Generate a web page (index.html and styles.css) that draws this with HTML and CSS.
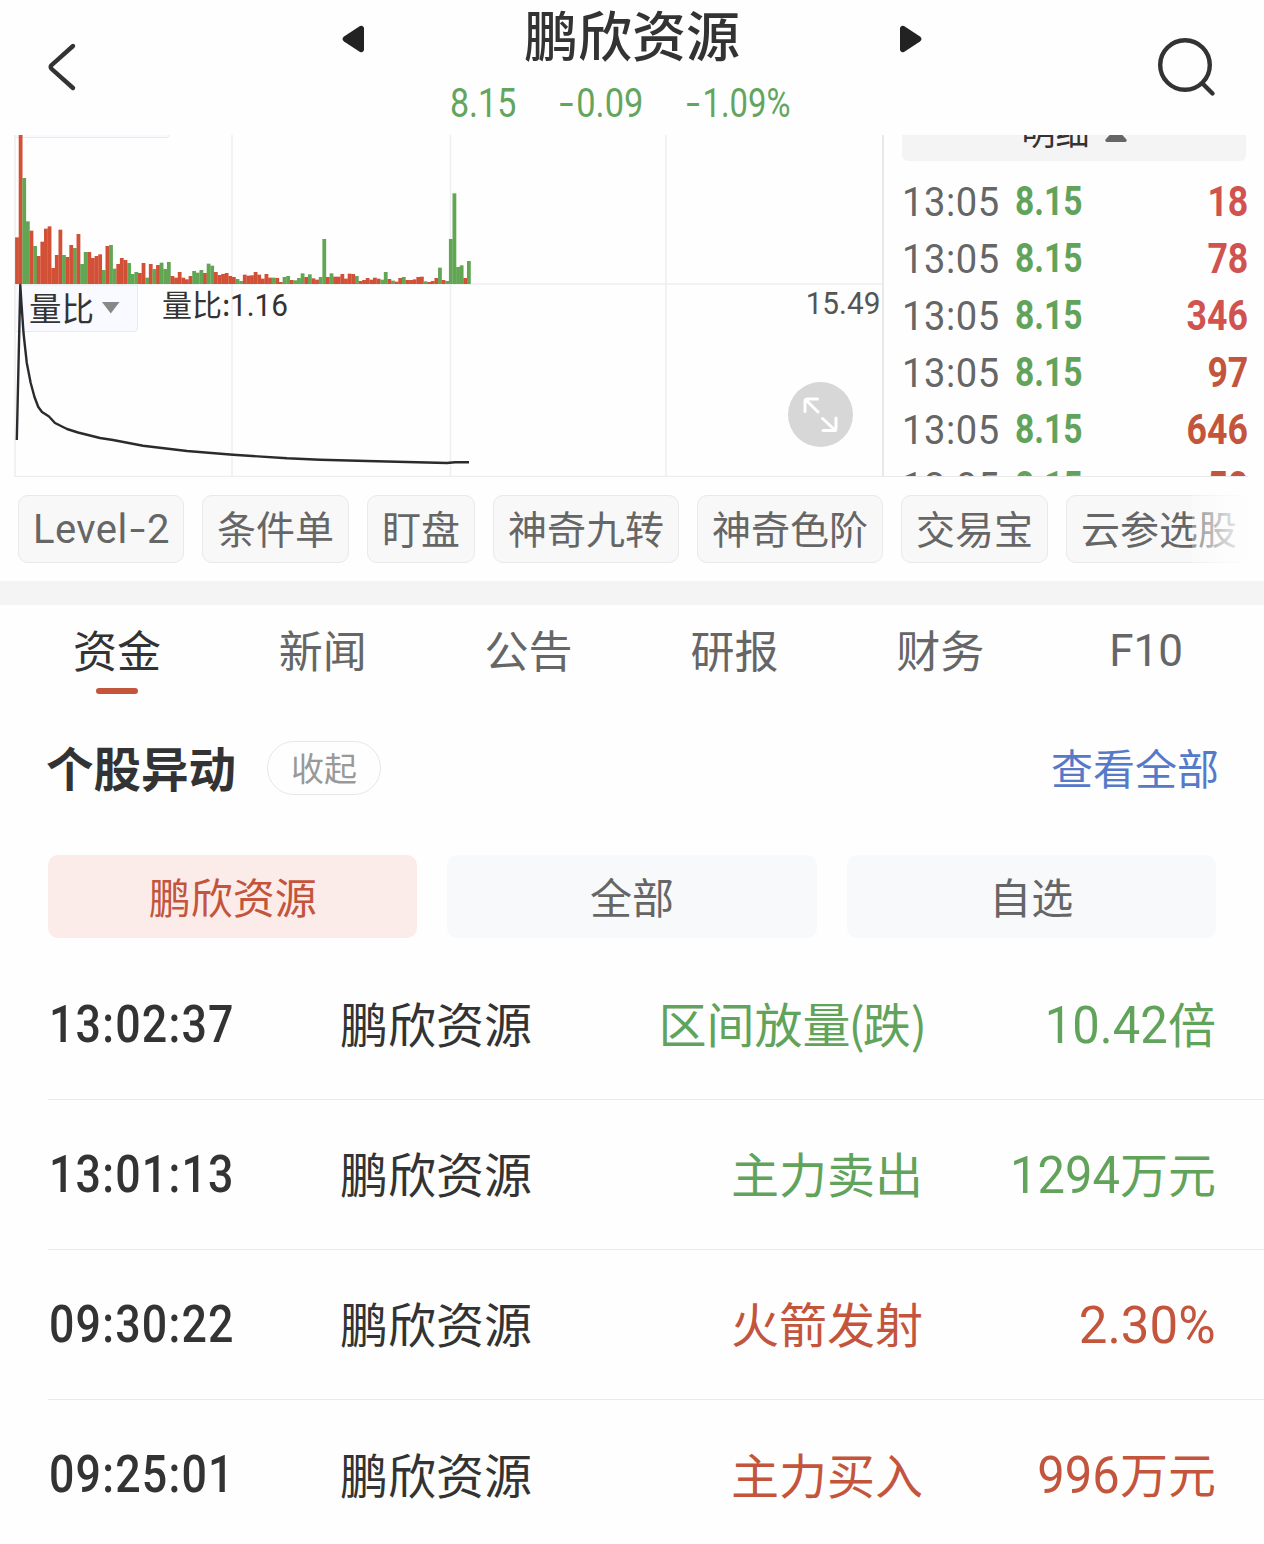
FILE: index.html
```html
<!DOCTYPE html>
<html lang="zh-CN">
<head>
<meta charset="utf-8">
<title>鹏欣资源</title>
<link rel="stylesheet" href="styles.css">
</head>
<body>
<header class="header">
  <svg class="back" width="30" height="50" viewBox="0 0 30 50"><path d="M26 4 4.500 23.200Q3 25 4.500 26.800L26 46"/></svg>
  <svg class="arrow prev" width="23" height="28" viewBox="0 0 23 28"><path d="M22 3v22q-1 3-4 2L2 16.500q-3-2.500 0-5L18 1q3-1 4 2z"/></svg>
  <div class="quote">
    <h1 class="name">鹏欣资源</h1>
    <div class="figures"><span class="num price">8.15</span><span class="num change"><span class="minus">-</span>0.09</span><span class="num percent"><span class="minus">-</span>1.09%</span></div>
  </div>
  <svg class="arrow next" width="23" height="28" viewBox="0 0 23 28"><path d="M1 3v22q1 3 4 2l16-10.500q3-2.500 0-5L5 1Q2 0 1 3z"/></svg>
  <svg class="search" width="60" height="60" viewBox="0 0 60 60"><circle cx="28" cy="28" r="24.800"/><path d="m46 47 9.500 9.500"/></svg>
</header>

<section class="market">
  <div class="charts">
    <svg class="plot" width="884" height="342" viewBox="0 135 884 342">
      <path class="grid" d="M15 135V476M232 135V476M450.500 135V476M666 135V476M14 284H883M14 476.500H883"/>
      <path class="grid edge" d="M883 135V477"/>
      <path class="tab-box" d="M15 130H169.500V134.500Q169.500 137.500 166.500 137.500H15zM15 285H137.500V328Q137.500 331.500 134 331.500H15z"/>
      <g id="bars"></g>
      <path class="ratio" d="M16.800 440 20.300 285 21.500 304 23.500 333 26.800 363 30.700 383 34.500 397 38.300 407 42 412 49 416.500 55 423 60 425.500 67 429 78 432.500 100 438 113 440 143 445.700 187 451 233 454.700 287 458.300 320 459.700 367 461 447 463 455 462.300 469 462.300"/>
      <path class="caret" d="M102 302h17.500l-8.700 11.500z"/>
    </svg>
    <span class="picker">量比</span>
    <span class="reading">量比:<span class="num">1.16</span></span>
    <span class="num top-value">15.49</span>
    <svg class="expand" width="66" height="66" viewBox="0.5 0.5 66 66"><circle cx="33" cy="33" r="32.500"/><path d="M30.500 30.500 18 18M30 17.500H20Q17.500 17.500 17.500 20V30M35 37l13 12M35.500 49H46Q48.500 49 48.500 46V36.500"/></svg>
  </div>
  <div class="trades">
    <div class="detail"><span>明细</span><svg width="22" height="14" viewBox="0 0 22 14"><path d="M11 0 21.500 11.500Q22 14 20 14H2Q0 14 .500 11.500z"/></svg></div>
    <div class="trade"><span class="num at">13:05</span><span class="num cost">8.15</span><span class="num lots rose">18</span></div>
    <div class="trade"><span class="num at">13:05</span><span class="num cost">8.15</span><span class="num lots rose">78</span></div>
    <div class="trade"><span class="num at">13:05</span><span class="num cost">8.15</span><span class="num lots rose">346</span></div>
    <div class="trade"><span class="num at">13:05</span><span class="num cost">8.15</span><span class="num lots">97</span></div>
    <div class="trade"><span class="num at">13:05</span><span class="num cost">8.15</span><span class="num lots">646</span></div>
    <div class="trade"><span class="num at">13:05</span><span class="num cost">8.15</span><span class="num lots">50</span></div>
  </div>
</section>

<nav class="chips">
  <span class="chip latin">Level<span class="dash">-</span>2</span><span class="chip">条件单</span><span class="chip">盯盘</span><span class="chip">神奇九转</span><span class="chip">神奇色阶</span><span class="chip">交易宝</span><span class="chip">云参选股</span>
</nav>

<nav class="tabs">
  <span class="tab active">资金</span><span class="tab">新闻</span><span class="tab">公告</span><span class="tab">研报</span><span class="tab">财务</span><span class="tab latin">F10</span>
</nav>

<main>
  <div class="section-head">
    <h2>个股异动</h2><span class="fold">收起</span><a class="all">查看全部</a>
  </div>
  <div class="filters"><span class="filter on">鹏欣资源</span><span class="filter">全部</span><span class="filter">自选</span></div>
  <div class="event down"><span class="num time">13:02:37</span><span class="stock">鹏欣资源</span><span class="kind bracketed">区间放量<span class="open">(</span>跌)</span><span class="value"><span class="num">10.42</span>倍</span></div>
  <div class="event down"><span class="num time">13:01:13</span><span class="stock">鹏欣资源</span><span class="kind">主力卖出</span><span class="value"><span class="num">1294</span>万元</span></div>
  <div class="event up"><span class="num time">09:30:22</span><span class="stock">鹏欣资源</span><span class="kind">火箭发射</span><span class="value"><span class="num rate">2.30%</span></span></div>
  <div class="event up"><span class="num time">09:25:01</span><span class="stock">鹏欣资源</span><span class="kind">主力买入</span><span class="value"><span class="num">996</span>万元</span></div>
</main>
<script src="chart.js"></script>
</body>
</html>
```
FILE: styles.css
```css
* { box-sizing: border-box; }
body {
  margin: 0;
  width: 1264px;
  height: 1544px;
  overflow: hidden;
  background: #fefefe;
  color: #333;
  font-family: "Noto Sans CJK SC", sans-serif;
}
h1, h2 { margin: 0; }
.num { font-family: Roboto, sans-serif; display: inline-block; white-space: nowrap; }

.header { height: 135px; position: relative; display: flex; justify-content: center; }
.back { position: absolute; left: 47px; top: 42px; fill: none; stroke: #333; stroke-width: 4.4; stroke-linecap: round; }
.arrow { position: absolute; top: 25px; fill: #222; }
.prev { left: 342px; }
.next { left: 899px; }
.search { position: absolute; left: 1157px; top: 37px; fill: none; stroke: #333; stroke-width: 4.4; stroke-linecap: round; }
.quote { width: 364px; }
.name { font-size: 54px; line-height: 68px; font-weight: 500; text-align: center; }
.figures { display: flex; color: #64a55e; font-size: 40px; line-height: 62px; margin-top: 5px; }
.figures .num { transform-origin: left; }
.price { width: 109px; transform: scaleX(.85); }
.change { width: 127px; transform: scaleX(.86); }
.percent { transform: scaleX(.82); }
.minus { display: inline-block; transform: scaleX(1.5); margin: 0 6px 0 3px; }

.market { display: flex; height: 342px; overflow: hidden; position: relative; }
.charts { width: 884px; position: relative; flex: none; }
.plot { display: block; }
.grid { fill: none; stroke: #eee; stroke-width: 1.5; }
.edge { stroke: #e9e9e9; stroke-width: 2; }
.tab-box { fill: #f9faff; stroke: #e7eaee; }
.up-bar { fill: #d25036; }
.down-bar { fill: #62a654; }
.ratio { fill: none; stroke: #2b2b2f; stroke-width: 2.4; stroke-linejoin: round; }
.caret { fill: #888; }
.picker { position: absolute; left: 29px; top: 149px; font-size: 32.5px; line-height: 46px; }
.reading { position: absolute; left: 162px; top: 146px; font-size: 30px; line-height: 44px; }
.reading .num { font-size: 32px; line-height: 44px; transform: scaleX(.93); transform-origin: left; }
.top-value { position: absolute; right: 4px; top: 149px; font-size: 32px; line-height: 38px; color: #555; transform: scaleX(.93); transform-origin: right; }
.expand { position: absolute; left: 788px; top: 247px; fill: none; stroke: #fff; stroke-width: 3; stroke-linecap: round; stroke-linejoin: round; }
.expand circle { fill: #d7d7d7; stroke: none; }
.trades { width: 346px; margin-left: 18px; }
.detail {
  height: 56px; width: 344px; margin: -30px 0 13px; border-radius: 6px; background: #f4f4f4;
  display: flex; justify-content: center; align-items: center; gap: 15px; font-size: 34px; line-height: 50px; font-weight: 400;
}
.detail span { padding-bottom: 4px; }
.detail svg { fill: #666; margin-top: 4px; }
.trade { display: flex; height: 57px; line-height: 57px; }
.at { width: 113px; font-size: 41px; color: #666; letter-spacing: .6px; transform: scaleX(.93); transform-origin: left; }
.cost { font-size: 40px; font-weight: 700; color: #62a35b; transform: translateY(-1px) scaleX(.84); transform-origin: left; }
.lots { margin-left: auto; font-size: 43px; font-weight: 700; color: #c4553d; transform: translateY(-1px) scaleX(.83); transform-origin: right; }
.rose { color: #d05350; }
.market::after { content: ""; position: absolute; left: 883px; right: 16px; bottom: 0; height: 1px; background: #e9e9e9; }

.chips { display: flex; gap: 18px; padding: 18px 0 18px 18px; height: 104px; position: relative; overflow: hidden; }
.chip {
  flex: none; height: 68px; padding: 0 14px; border: 1px solid #e9e9e9; border-radius: 10px;
  background: #f8f8f8; color: #666; font-size: 39px; line-height: 62px; white-space: nowrap;
}
.chip.latin { width: 166px; font-family: Roboto, sans-serif; font-size: 40px; line-height: 68px; letter-spacing: .4px; }
.dash { display: inline-block; transform: scaleX(1.4); margin: 0 4px; }
.chips::after {
  content: ""; position: absolute; left: 1192px; right: 0; top: 0; bottom: 0;
  background: linear-gradient(90deg, rgba(254,254,254,.3), #fefefe 58px);
}

.tabs { border-top: 24px solid #f4f4f4; height: 125px; padding: 0 15px 0 14px; display: grid; grid-template-columns: repeat(6, 1fr); }
.tab { font-size: 44px; line-height: 88px; text-align: center; color: #666; }
.tab.latin { font-family: Roboto, sans-serif; line-height: 92px; }
.active { color: #333; }
.active::after { content: ""; display: block; width: 42px; height: 6px; margin: -5px auto 0; border-radius: 3px; background: #c4553d; }

.section-head { height: 124px; padding: 0 45px 0 46px; display: flex; align-items: center; }
h2 { font-size: 47.5px; font-weight: 700; padding-bottom: 3px; }
.fold { width: 114px; height: 54px; margin-left: 31px; border: 1px solid #e7e7e7; border-radius: 27px; color: #999; font-size: 33px; line-height: 50px; text-align: center; }
.all { margin-left: auto; color: #567ac8; font-size: 42px; padding-bottom: 3px; }
.filters { display: flex; gap: 30px; padding: 0 48px; margin-top: 25px; }
.filter { flex: 1; height: 83px; border-radius: 10px; background: #f8f9fb; color: #666; text-align: center; font-size: 42px; line-height: 82px; }
.on { background: #fbecea; color: #c4553d; }
.event {
  margin-left: 48px; padding-right: 48px; height: 150px; border-bottom: 1px solid #e9e9e9;
  display: grid; grid-template-columns: 292px 292px 291px 1fr; align-items: center; font-size: 48px; line-height: 72px;
}
.filters + .event { margin-top: 12px; }
.event:last-child { border: 0; }
.time { font-size: 52px; font-weight: 500; letter-spacing: 1.4px; transform: translateX(1px) scaleX(.86); transform-origin: left; }
.stock, .kind { padding-bottom: 5px; }
.kind, .value { text-align: right; white-space: nowrap; color: #c4553d; }
.down .kind, .down .value { color: #62a35b; }
.bracketed { margin-right: -4px; }
.open { margin: 0 -2px; }
.value { padding-bottom: 2px; }
.value .num { font-size: 52px; line-height: 72px; transform: scaleX(.94); transform-origin: right; }
.value .rate { transform: translateX(-1px) scaleX(.98); }
```
FILE: chart.js
```js
// Volume per minute: height in thirds of a pixel and direction (r = up, g = down)
const volume = `140r 462r 318g 188g 160r 114g 84r 127r 166r 173r 48r 87r 163r 87g 81r 117r 108g 150r 60g 96g
96r 78r 84r 89r 42g 114r 117g 46g 60r 78r 72r 63g 30g 36g 33r 63r 19g 60r 45g 57r 64g 45g 66g 24r 19r 36r 19r 14r 24r
39g 34g 42g 33r 61g 55g 36r 27r 30r 33r 24r 21r 15g 9g 28r 25r 26r 36r 28r 16r 30r 19r 19g 18r 6r 21g 24g 12r 11g 18g
32g 21r 29g 17r 13r 21g 135g 21r 32g 22r 22r 30r 16r 31r 30r 24g 9r 12r 18r 13r 19r 16r 13g 36g 15r 10g 7r 18r 21g
12r 12r 14r 21r 22r 8g 6r 9r 18r 49g 12r 9g 135g 272g 51g 56g 18r 69g`.split(/\s+/);
const group = document.getElementById("bars");
const step = 3.615;
volume.forEach((entry, i) => {
  const height = parseInt(entry, 10) / 3;
  const bar = document.createElementNS("http://www.w3.org/2000/svg", "rect");
  bar.setAttribute("x", 15.1 + i * step);
  bar.setAttribute("y", 284 - height);
  bar.setAttribute("width", 3.8);
  bar.setAttribute("height", height);
  bar.setAttribute("class", entry.endsWith("r") ? "up-bar" : "down-bar");
  group.appendChild(bar);
});
```
